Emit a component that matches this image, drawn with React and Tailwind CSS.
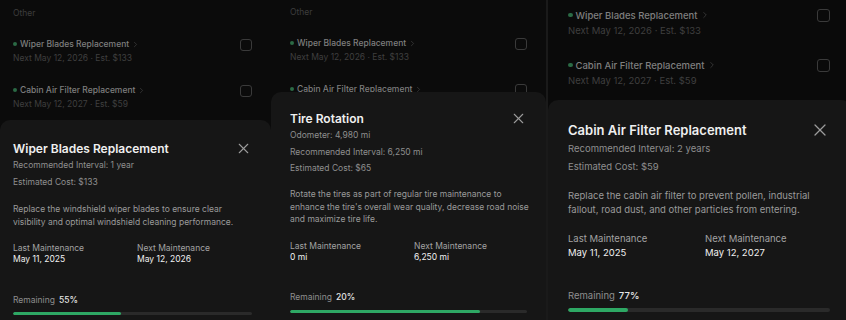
import { X, ChevronRight } from "lucide-react";

const listItems = [
  { title: "Wiper Blades Replacement", sub: "Next May 12, 2026 · Est. $133" },
  { title: "Cabin Air Filter Replacement", sub: "Next May 12, 2027 · Est. $59" },
];

function ListRow({ item, s }) {
  return (
    <div className="flex items-start justify-between">
      <div className="flex flex-col">
        <div className={`flex items-center ${s.rowTitle}`}>
          <span className={`${s.dot} rounded-full bg-[#2b6a45] mr-[3px]`} />
          <span className="text-[#7f7f7f] font-medium">{item.title}</span>
          <ChevronRight className="text-[#474747] ml-[2px]" size={s.chev} strokeWidth={1.6} />
        </div>
        <div className={`text-[#3f3f3f] ${s.rowSub}`}>{item.sub}</div>
      </div>
      <div className={`${s.check} rounded-[3px] border-[1.5px] border-[#3a3a3a]`} />
    </div>
  );
}

function Sheet({ data, s }) {
  const fill = 100 - data.remaining;
  return (
    <div className={`flex-1 bg-[#161616] rounded-t-[10px] flex flex-col ${s.sheetPad}`}>
      <div className="flex items-center justify-between">
        <h2 className={`text-[#efefef] font-semibold ${s.title}`}>{data.title}</h2>
        <X className="text-[#9c9c9c]" size={s.x} strokeWidth={1.5} />
      </div>
      <div className={`text-[#8e8e8e] ${s.info}`}>
        {data.info.map((line) => (
          <div key={line}>{line}</div>
        ))}
      </div>
      <p className={`text-[#9a9a9a] whitespace-nowrap ${s.desc}`}>
        {data.desc.map((line) => (
          <span key={line} className="block">{line}</span>
        ))}
      </p>
      <div className={`grid ${s.grid}`}>
        <div>
          <div className="text-[#a2a2a2]">Last Maintenance</div>
          <div className="text-[#f0f0f0]">{data.last}</div>
        </div>
        <div>
          <div className="text-[#a2a2a2]">Next Maintenance</div>
          <div className="text-[#f0f0f0]">{data.next}</div>
        </div>
      </div>
      <div className={`flex items-center gap-[4px] ${s.remaining}`}>
        <span className="text-[#8e8e8e]">Remaining</span>
        <span className="text-[#e6e6e6] font-medium">{data.remaining}%</span>
      </div>
      <div className={`w-full rounded-full bg-[#2a2a2a] overflow-hidden ${s.bar}`}>
        <div className="h-full rounded-full bg-[#2ea864]" style={{ width: `${fill}%` }} />
      </div>
    </div>
  );
}

const small = {
  rowTitle: "text-[8.5px] leading-[12px]",
  rowSub: "text-[8.5px] leading-[12px] mt-[2px]",
  dot: "w-[4px] h-[4px]",
  chev: 9,
  check: "w-[12px] h-[12px] mt-[1px]",
  x: 17,
  title: "text-[12px] leading-[16px]",
  info: "text-[8.5px] leading-[16.5px]",
  grid: "text-[8.5px] leading-[11px] mt-[15px] grid-cols-[124px_1fr]",
  remaining: "text-[8.5px] leading-[12px] mt-[28.5px]",
  bar: "h-[3px] mt-[6.5px]",
};

const big = {
  rowTitle: "text-[9.5px] leading-[13px]",
  rowSub: "text-[9.5px] leading-[13px] mt-[2px]",
  dot: "w-[4.5px] h-[4.5px]",
  chev: 10,
  check: "w-[13px] h-[13px] mt-[0.5px]",
  x: 20,
  title: "text-[13px] leading-[18px]",
  info: "text-[9.5px] leading-[18px]",
  grid: "text-[9.5px] leading-[14px] mt-[15px] grid-cols-[137px_1fr]",
  remaining: "text-[9.5px] leading-[13px] mt-[28.5px]",
  bar: "h-[3.5px] mt-[6.5px]",
};

const wiper = {
  title: "Wiper Blades Replacement",
  info: ["Recommended Interval: 1 year", "Estimated Cost: $133"],
  desc: [
    "Replace the windshield wiper blades to ensure clear",
    "visibility and optimal windshield cleaning performance.",
  ],
  last: "May 11, 2025",
  next: "May 12, 2026",
  remaining: 55,
};

const tire = {
  title: "Tire Rotation",
  info: ["Odometer: 4,980 mi", "Recommended Interval: 6,250 mi", "Estimated Cost: $65"],
  desc: [
    "Rotate the tires as part of regular tire maintenance to",
    "enhance the tire's overall wear quality, decrease road noise",
    "and maximize tire life.",
  ],
  last: "0 mi",
  next: "6,250 mi",
  remaining: 20,
};

const cabin = {
  title: "Cabin Air Filter Replacement",
  info: ["Recommended Interval: 2 years", "Estimated Cost: $59"],
  desc: [
    "Replace the cabin air filter to prevent pollen, industrial",
    "fallout, road dust, and other particles from entering.",
  ],
  last: "May 11, 2025",
  next: "May 12, 2027",
  remaining: 77,
};

export default function App() {
  return (
    <div
      className="flex w-[846px] h-[320px] overflow-hidden bg-[#0b0b0b]"
      style={{ fontFamily: "Inter, 'Noto Sans', sans-serif" }}
    >
      {/* Panel 1 */}
      <div className="w-[271px] shrink-0 h-full flex flex-col overflow-hidden">
        <div className="h-[120px] shrink-0 overflow-hidden pl-[13px] pr-[19px] pt-[7px]">
          <div className="text-[8.5px] leading-[12px] text-[#3d3d3d]">Other</div>
          <div className="mt-[19px] flex flex-col gap-[20px]">
            {listItems.map((it) => (
              <ListRow key={it.title} item={it} s={small} />
            ))}
          </div>
        </div>
        <Sheet data={wiper} s={{ ...small, sheetPad: "pl-[13px] pr-[19px] pt-[20px]", desc: "text-[8.5px] leading-[12.5px] mt-[13px]" }} />
      </div>

      {/* Panel 2 */}
      <div className="w-[275px] shrink-0 h-full flex flex-col overflow-hidden">
        <div className="h-[92px] shrink-0 overflow-hidden px-[19px] pt-[6px]">
          <div className="text-[8.5px] leading-[12px] text-[#3d3d3d]">Other</div>
          <div className="mt-[19px] flex flex-col gap-[20px]">
            {listItems.map((it) => (
              <ListRow key={it.title} item={it} s={small} />
            ))}
          </div>
        </div>
        <Sheet data={tire} s={{ ...small, sheetPad: "px-[19px] pt-[18px]", desc: "text-[8.5px] leading-[12.5px] mt-[11.5px]" }} />
      </div>

      {/* Panel 3 */}
      <div className="w-[300px] shrink-0 h-full overflow-hidden border-l-2 border-[#1a1a1a] bg-[#0a0a0a]">
        <div className="w-[303px] h-full flex flex-col">
          <div className="h-[100px] shrink-0 overflow-hidden pl-[20px] pr-[21px] pt-[8.5px]">
            <div className="flex flex-col gap-[22px]">
              {listItems.map((it) => (
                <ListRow key={it.title} item={it} s={big} />
              ))}
            </div>
          </div>
          <Sheet data={cabin} s={{ ...big, sheetPad: "pl-[20px] pr-[21px] pt-[20px]", desc: "text-[9.5px] leading-[14px] mt-[13px]" }} />
        </div>
      </div>
    </div>
  );
}
